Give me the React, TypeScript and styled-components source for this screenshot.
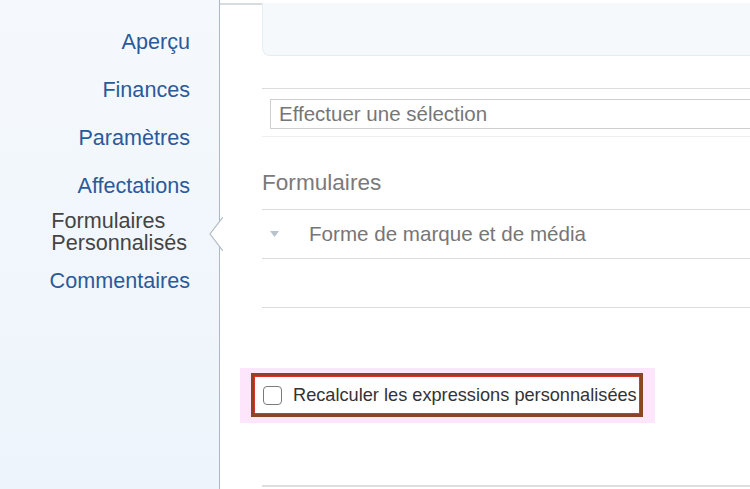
import React from "react";
import styled, { createGlobalStyle } from "styled-components";

const GlobalStyle = createGlobalStyle`
  html, body {
    margin: 0;
    padding: 0;
    background: #ffffff;
    overflow: hidden;
  }
  body {
    font-family: "Liberation Sans", Arial, sans-serif;
  }
`;

const Page = styled.div`
  display: flex;
  width: 750px;
  height: 489px;
  overflow: hidden;
`;

const Sidebar = styled.nav`
  width: 220px;
  flex-shrink: 0;
  background: linear-gradient(180deg, #f5f9fd 0%, #edf4fb 100%);
  border-right: 1px solid #aeb8c2;
  display: flex;
  flex-direction: column;
  align-items: flex-end;
  padding: 18px 29px 0 0;
  box-sizing: border-box;
`;

const NavItem = styled.a<{ $active?: boolean }>`
  position: relative;
  display: block;
  font-size: 21.6px;
  line-height: 22px;
  padding: ${(p) => (p.$active ? "0 3px 3px 0" : "13px 0")};
  color: ${(p) => (p.$active ? "#444444" : "#2b5a9a")};
  text-decoration: none;
  text-align: left;
  cursor: pointer;
`;

const Notch = styled.svg`
  position: absolute;
  right: -33px;
  top: 7px;
`;

const Main = styled.main`
  flex: 1;
  display: flex;
  flex-direction: column;
  padding-left: 42px;
  min-width: 0;
`;

const HeaderRow = styled.div`
  display: flex;
  margin-left: -42px;
  margin-top: 3px;
`;

const HeaderSpacer = styled.div`
  width: 42px;
  border-top: 2px solid #d9dcdf;
`;

const HeaderPanel = styled.div`
  flex: 1;
  height: 52px;
  background: #f5f9fc;
  border-left: 1px solid #e6edf1;
  border-bottom: 1px solid #e6edf1;
  border-bottom-left-radius: 8px;
`;

const SelectSection = styled.div`
  margin-top: 32px;
  border-top: 1px solid #dcdcdc;
  border-bottom: 1px solid #efefef;
  padding: 10px 0 7px 8px;
`;

const SelectBox = styled.div`
  height: 28px;
  margin-right: -6px;
  border: 1px solid #cfcfcf;
  background: #fff;
  display: flex;
  align-items: center;
  padding-left: 8px;
  font-size: 20.5px;
  color: #767676;
`;

const SectionTitle = styled.h2`
  margin: 34px 0 14px;
  font-size: 22.6px;
  line-height: 24px;
  font-weight: normal;
  color: #7a7a7a;
`;

const FormRow = styled.div<{ $last?: boolean }>`
  height: 48px;
  border-top: 1px solid #dcdcdc;
  border-bottom: ${(p) => (p.$last ? "1px solid #dcdcdc" : "none")};
  display: flex;
  align-items: center;
  font-size: 20.6px;
  color: #767676;
`;

const Caret = styled.svg`
  margin: 0 30px 0 8px;
`;

const Highlight = styled.div`
  margin: 60px 0 0 -22px;
  align-self: flex-start;
  background: #fde5fb;
  padding: 5px 12px 6px 11px;
`;

const Outline = styled.label`
  display: flex;
  align-items: center;
  gap: 11px;
  height: 38px;
  padding: 0 3px 0 9px;
  border: 3px solid #8a4524;
  box-shadow: inset 0 0 0 1px #d9342b;
  background: #fff;
  font-size: 18.2px;
  color: #333;
  cursor: pointer;
`;

const CheckBox = styled.span`
  width: 17px;
  height: 17px;
  border: 1.5px solid #7b7b7b;
  border-radius: 4px;
  background: #fff;
  flex-shrink: 0;
`;

const BottomRule = styled.div`
  margin-top: 62px;
  border-top: 2px solid #dedede;
`;

const navItems = ["Aperçu", "Finances", "Paramètres", "Affectations"];

export default function App() {
  return (
    <>
      <GlobalStyle />
      <Page>
        <Sidebar>
          {navItems.map((item) => (
            <NavItem key={item}>{item}</NavItem>
          ))}
          <NavItem $active>
            Formulaires
            <br />
            Personnalisés
            <Notch width="14" height="34" viewBox="0 0 14 34">
              <path d="M14 0 L1 17 L14 34 Z" fill="#ffffff" />
              <path d="M14 0 L1 17 L14 34" fill="none" stroke="#b3bcc5" strokeWidth="1.2" />
            </Notch>
          </NavItem>
          <NavItem>Commentaires</NavItem>
        </Sidebar>
        <Main>
          <HeaderRow>
            <HeaderSpacer />
            <HeaderPanel />
          </HeaderRow>
          <SelectSection>
            <SelectBox>Effectuer une sélection</SelectBox>
          </SelectSection>
          <SectionTitle>Formulaires</SectionTitle>
          <FormRow>
            <Caret width="9" height="6" viewBox="0 0 9 6">
              <path d="M0 0 L9 0 L4.5 6 Z" fill="#b9c3cb" />
            </Caret>
            Forme de marque et de média
          </FormRow>
          <FormRow $last />
          <Highlight>
            <Outline>
              <CheckBox />
              Recalculer les expressions personnalisées
            </Outline>
          </Highlight>
          <BottomRule />
        </Main>
      </Page>
    </>
  );
}
